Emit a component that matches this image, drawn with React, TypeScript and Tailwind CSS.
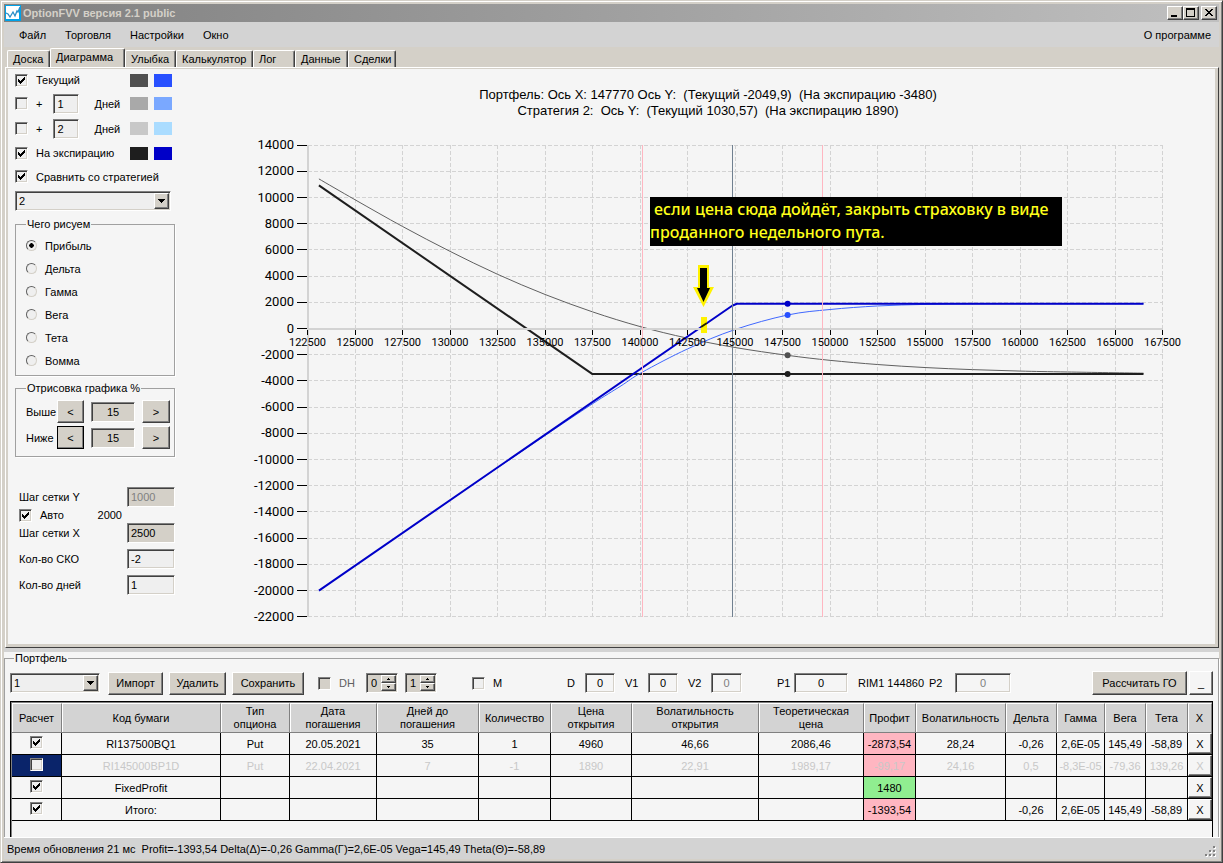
import { useState } from "react";
import type { ReactNode } from "react";
import clsx from "clsx";

const sunken =
  "border border-[#808080] border-r-white border-b-white shadow-[inset_1px_1px_#404040,inset_-1px_-1px_#d4d0c8]";
const raised =
  "border border-white border-r-[#404040] border-b-[#404040] shadow-[inset_-1px_-1px_#808080]";
const etched = "border border-[#a0a0a0] shadow-[1px_1px_#ffffff]";

const menu = ["Файл", "Торговля", "Настройки", "Окно"];

const tabs = [
  { label: "Доска", width: "w-[43px]" },
  { label: "Диаграмма", width: "w-[75px]" },
  { label: "Улыбка", width: "w-[51px]" },
  { label: "Калькулятор", width: "w-[77px]" },
  { label: "Лог", width: "w-[42px]" },
  { label: "Данные", width: "w-[53px]" },
  { label: "Сделки", width: "w-[48px]" },
];

const greeks = ["Прибыль", "Дельта", "Гамма", "Вега", "Тета", "Вомма"];

const columns = [
  { title: "Расчет", width: "w-[50px]" },
  { title: "Код бумаги", width: "w-[159px]" },
  { title: "Тип\nопциона", width: "w-[69px]" },
  { title: "Дата\nпогашения", width: "w-[87px]" },
  { title: "Дней до\nпогашения", width: "w-[102px]" },
  { title: "Количество", width: "w-[72px]" },
  { title: "Цена\nоткрытия", width: "w-[81px]" },
  { title: "Волатильность\nоткрытия", width: "w-[127px]" },
  { title: "Теоретическая\nцена", width: "w-[105px]" },
  { title: "Профит", width: "w-[52px]" },
  { title: "Волатильность", width: "w-[90px]" },
  { title: "Дельта", width: "w-[51px]" },
  { title: "Гамма", width: "w-[48px]" },
  { title: "Вега", width: "w-[41px]" },
  { title: "Тета", width: "w-[42px]" },
  { title: "X", width: "w-[24px]" },
];

const PROFIT = 8;

const rows = [
  {
    on: true,
    cells: ["RI137500BQ1", "Put", "20.05.2021", "35", "1", "4960", "46,66", "2086,46", "-2873,54", "28,24", "-0,26", "2,6E-05", "145,49", "-58,89"],
  },
  {
    on: false,
    cells: ["RI145000BP1D", "Put", "22.04.2021", "7", "-1", "1890", "22,91", "1989,17", "-99,17", "24,16", "0,5", "-8,3E-05", "-79,36", "139,26"],
  },
  {
    on: true,
    cells: ["FixedProfit", "", "", "", "", "", "", "", "1480", "", "", "", "", ""],
  },
  {
    on: true,
    cells: ["Итого:", "", "", "", "", "", "", "", "-1393,54", "", "-0,26", "2,6E-05", "145,49", "-58,89"],
  },
];

type CheckProps = {
  label: string;
  checked?: boolean;
  disabled?: boolean;
  hideLabel?: boolean;
};

const Check = ({ label, checked = false, disabled, hideLabel }: CheckProps) => {
  const [on, setOn] = useState(checked);
  return (
    <label className={clsx("inline-flex items-center gap-2", disabled && "text-[#606060]")}>
      <span className="grid size-[13px] shrink-0">
        <input
          type="checkbox"
          checked={on}
          disabled={disabled}
          aria-label={hideLabel ? label : undefined}
          onChange={() => setOn(!on)}
          className={clsx("col-start-1 row-start-1 size-[13px] appearance-none", sunken, disabled ? "bg-[#d4d0c8]" : "bg-[#efefef]")}
        />
        {on && (
          <svg viewBox="0 0 13 13" className="pointer-events-none col-start-1 row-start-1 size-[13px]" shapeRendering="crispEdges">
            <path d="M3 5h1v1h1v1h1v-1h1v-1h1v-1h1v-1h1v3h-1v1h-1v1h-1v1h-1v1h-1v-1h-1v-1h-1z" />
          </svg>
        )}
      </span>
      {!hideLabel && <span>{label}</span>}
    </label>
  );
};

type FieldProps = {
  label: string;
  value: string;
  className?: string;
  disabled?: boolean;
};

const Field = ({ label, value, className, disabled }: FieldProps) => (
  <input
    type="text"
    aria-label={label}
    defaultValue={value}
    disabled={disabled}
    className={clsx("h-5 shrink-0 px-[3px] disabled:text-[#808080]", sunken, className)}
  />
);

const Combo = ({ label, value, className }: { label: string; value: string; className: string }) => (
  <div className={clsx("relative h-5 shrink-0", className)}>
    <select aria-label={label} defaultValue={value} className={clsx("size-full appearance-none bg-[#efefef] pl-[3px]", sunken)}>
      <option>1</option>
      <option>2</option>
    </select>
    <span className={clsx("pointer-events-none absolute top-0.5 right-0.5 flex h-4 w-[15px] items-center justify-center bg-[#d4d0c8]", raised)}>
      <svg viewBox="0 0 7 4" className="h-1 w-[7px]" shapeRendering="crispEdges">
        <path d="M0 0h7v1h-1v1h-1v1h-1v1h-1v-1h-1v-1h-1v-1h-1z" />
      </svg>
    </span>
  </div>
);

const PushButton = ({ children, className, label }: { children: ReactNode; className?: string; label?: string }) => (
  <button type="button" aria-label={label} className={clsx("flex shrink-0 items-center justify-center", raised, className)}>
    {children}
  </button>
);

const Spin = ({ label, value }: { label: string; value: string }) => (
  <div className={clsx("flex h-5 w-8 shrink-0 bg-[#d4d0c8] p-px", sunken)}>
    <input type="text" aria-label={label} defaultValue={value} className="w-3 min-w-0 grow pl-[3px]" />
    <div className="flex w-[15px] flex-col">
      <PushButton label={`${label} +`} className="h-2 w-full bg-[#d4d0c8]">
        <svg viewBox="0 0 3 2" className="h-0.5 w-[3px]" shapeRendering="crispEdges">
          <path d="M1 0h1v1h1v1h-3v-1h1z" />
        </svg>
      </PushButton>
      <PushButton label={`${label} -`} className="h-2 w-full bg-[#d4d0c8]">
        <svg viewBox="0 0 3 2" className="h-0.5 w-[3px]" shapeRendering="crispEdges">
          <path d="M0 0h3v1h-1v1h-1v-1h-1z" />
        </svg>
      </PushButton>
    </div>
  </div>
);

const TitleBar = () => (
  <header className="flex h-[18px] items-center bg-gradient-to-r from-[#808080] to-[#c0c0c0] pr-0.5">
    <svg viewBox="0 0 16 16" className="ml-px size-4">
      <rect width="16" height="16" fill="#00a2e8" />
      <path d="M1 1h14v3h-1v10h-13z" fill="#fff" />
      <path d="M1 8l2 1 2 3 3-5 2 4 2-5 1 1 2-5" fill="none" stroke="#2a8fc8" strokeWidth="1.3" />
    </svg>
    <h1 className="ml-0.5 text-[11px] font-bold text-[#d4d0c8]">OptionFVV версия 2.1 public</h1>
    <div className="ml-auto flex">
      <PushButton label="Свернуть" className="h-3.5 w-4 bg-[#d4d0c8]">
        <svg viewBox="0 0 12 10" className="h-2.5 w-3" shapeRendering="crispEdges">
          <path d="M2 7h6v2h-6z" />
        </svg>
      </PushButton>
      <PushButton label="Развернуть" className="h-3.5 w-4 bg-[#d4d0c8]">
        <svg viewBox="0 0 12 10" className="h-2.5 w-3" shapeRendering="crispEdges">
          <path d="M1 0h9v9h-9zM2 2v6h7v-6z" fillRule="evenodd" />
        </svg>
      </PushButton>
      <PushButton label="Закрыть" className="ml-0.5 h-3.5 w-4 bg-[#d4d0c8]">
        <svg viewBox="0 0 12 10" className="h-2.5 w-3" shapeRendering="crispEdges">
          <path d="M2 1h2v1h1v1h2v-1h1v-1h2v1h-1v1h-1v1h-1v1h1v1h1v1h1v1h-2v-1h-1v-1h-2v1h-1v1h-2v-1h1v-1h1v-1h1v-1h-1v-1h-1v-1h-1z" />
        </svg>
      </PushButton>
    </div>
  </header>
);

const TabStrip = () => (
  <div role="tablist" className="flex h-5 items-end pl-[3px]">
    {tabs.map((tab) => {
      const active = tab.label === "Диаграмма";
      return (
        <button
          key={tab.label}
          type="button"
          role="tab"
          aria-selected={active}
          className={clsx(
            "rounded-t-[2px] border border-b-0 border-white border-r-[#404040] bg-[#d4d0c8] pl-[5px] text-left shadow-[inset_-1px_0_#808080]",
            active ? "h-[19px] pb-0.5" : "h-[17px]",
            tab.width,
          )}
        >
          {tab.label}
        </button>
      );
    })}
  </div>
);

const Swatches = ({ first, second }: { first: string; second: string }) => (
  <span className="ml-auto flex gap-1.5 pr-[3px]">
    <span className={clsx("h-[13px] w-[18px]", first)} />
    <span className={clsx("h-[13px] w-[18px]", second)} />
  </span>
);

const Step = ({ label, focused }: { label: string; focused?: boolean }) => (
  <div className="flex h-[23px] items-center">
    <span className="w-[31px]">{label}</span>
    <PushButton label={`${label} меньше`} className={clsx("h-[23px] w-[27px] bg-[#d4d0c8]", focused && "outline outline-1 -outline-offset-1 outline-black")}>
      &lt;
    </PushButton>
    <Field label={label} value="15" className="ml-[7px] w-11 bg-[#d4d0c8] text-center" />
    <PushButton label={`${label} больше`} className="ml-[7px] h-[23px] w-7 bg-[#d4d0c8]">
      &gt;
    </PushButton>
  </div>
);

const Settings = () => {
  const [greek, setGreek] = useState("Прибыль");
  return (
    <aside className="w-[177px] shrink-0 pr-2.5 pl-[7px]">
      <div className="flex h-[22px] items-center">
        <Check label="Текущий" checked />
        <Swatches first="bg-[#505050]" second="bg-[#2850ff]" />
      </div>
      <div className="flex h-[25px] items-center">
        <Check label="+" />
        <Field label="Дней, первая линия" value="1" className="ml-[11px] w-[26px] bg-[#efefef]" />
        <span className="ml-[15px]">Дней</span>
        <Swatches first="bg-[#a9a9a9]" second="bg-[#7aa8ff]" />
      </div>
      <div className="flex h-[25px] items-center">
        <Check label="+" />
        <Field label="Дней, вторая линия" value="2" className="ml-[11px] w-[26px] bg-[#efefef]" />
        <span className="ml-[15px]">Дней</span>
        <Swatches first="bg-[#c8c8c8]" second="bg-[#aadcff]" />
      </div>
      <div className="flex h-6 items-center">
        <Check label="На экспирацию" checked />
        <Swatches first="bg-[#1e1e1e]" second="bg-[#0000c8]" />
      </div>
      <div className="flex h-[23px] items-center">
        <Check label="Сравнить со стратегией" checked />
      </div>
      <Combo label="Стратегия" value="2" className="mt-[3px] w-[156px]" />

      <fieldset className={clsx("mt-[7px] px-2.5 pt-1 pb-[3px]", etched)}>
        <legend className="px-px leading-3">Чего рисуем</legend>
        {greeks.map((name) => (
          <label key={name} className="flex h-[23px] items-center gap-2">
            <input
              type="radio"
              name="greek"
              checked={greek === name}
              onChange={() => setGreek(name)}
              className="size-[11px] appearance-none rounded-full border border-[#606060] border-r-[#d4d0c8] border-b-[#d4d0c8] bg-[#efefef] checked:bg-[radial-gradient(circle,#000_2px,#efefef_2.5px)]"
            />
            {name}
          </label>
        ))}
      </fieldset>

      <fieldset className={clsx("mt-1.5 flex flex-col gap-[3px] pt-1.5 pr-1 pb-[7px] pl-2.5", etched)}>
        <legend className="px-px leading-3">Отрисовка графика %</legend>
        <Step label="Выше" />
        <Step label="Ниже" focused />
      </fieldset>

      <div className="mt-[30px] flex flex-col pl-1">
        <div className="flex h-5 items-center justify-between">
          Шаг сетки Y
          <Field label="Шаг сетки Y" value="1000" disabled className="w-12 bg-[#d4d0c8]" />
        </div>
        <div className="flex h-4 items-center">
          <Check label="Авто" checked />
          <span className="ml-auto pr-[53px]">2000</span>
        </div>
        <div className="flex h-5 items-center justify-between">
          Шаг сетки X
          <Field label="Шаг сетки X" value="2500" className="w-12 bg-[#d4d0c8]" />
        </div>
        <div className="mt-1.5 flex h-5 items-center justify-between">
          Кол-во СКО
          <Field label="Кол-во СКО" value="-2" className="w-12 bg-[#efefef]" />
        </div>
        <div className="mt-1.5 flex h-5 items-center justify-between">
          Кол-во дней
          <Field label="Кол-во дней" value="1" className="w-12 bg-[#efefef]" />
        </div>
      </div>
    </aside>
  );
};

type Point = [number, number];

const px = (price: number) => 122.5 + (price - 122500) * 0.019;
const py = (profit: number) => 259.5 - profit * 0.0131;

const line = (points: Point[]) => points.map(([a, b]) => `${px(a)},${py(b)}`).join(" ");

// Catmull-Rom through the points, written as cubic beziers
const smooth = (points: Point[]) => {
  const p = points.map(([a, b]) => [px(a), py(b)]);
  let d = `M${p[0][0]} ${p[0][1]}`;
  for (let i = 0; i < p.length - 1; i++) {
    const a = p[Math.max(i - 1, 0)];
    const b = p[i];
    const c = p[i + 1];
    const e = p[Math.min(i + 2, p.length - 1)];
    d += `C${b[0] + (c[0] - a[0]) / 6} ${b[1] + (c[1] - a[1]) / 6} ${c[0] - (e[0] - b[0]) / 6} ${c[1] - (e[1] - b[1]) / 6} ${c[0]} ${c[1]}`;
  }
  return d;
};

const portfolioNow: Point[] = [
  [123100, 11420], [125000, 9830], [127500, 7790], [130000, 5890], [132500, 4140], [135000, 2600],
  [137500, 1270], [140000, 150], [142500, -740], [145000, -1450], [147770, -2050], [150000, -2430],
  [152500, -2750], [155000, -2980], [157500, -3140], [160000, -3250], [162500, -3320], [166500, -3410],
];
const portfolioExpiry: Point[] = [[123100, 10920], [137500, -3480], [166500, -3480]];
const strategyNow: Point[] = [
  [123100, -20010], [130000, -13115], [132500, -10630], [135000, -8170], [137500, -5750], [139000, -4380],
  [140100, -3350], [142500, -1560], [145000, -80], [147770, 1031], [150000, 1450], [152500, 1720],
  [155000, 1840], [157500, 1880], [160000, 1890], [166500, 1890],
];
const strategyExpiry: Point[] = [[123100, -20010], [144850, 1740], [145100, 1890], [166500, 1890]];

const xTicks = Array.from({ length: 19 }, (_, i) => 122500 + i * 2500);
const yTicks = Array.from({ length: 19 }, (_, i) => 14000 - i * 2000);

const Chart = () => (
  <div className="min-w-0 flex-1">
    <svg viewBox="0 0 1030 575" className="block h-auto w-full" role="img" aria-label="Диаграмма прибыли">
      <g className="font-['Liberation_Sans',Arial,sans-serif] text-[13px]" textAnchor="middle">
        <text x="523" y="30" className="whitespace-pre">
          {"Портфель: Ось X: 147770 Ось Y:  (Текущий -2049,9)  (На экспирацию -3480)"}
        </text>
        <text x="523" y="46" className="whitespace-pre">
          {"Стратегия 2:  Ось Y:  (Текущий 1030,57)  (На экспирацию 1890)"}
        </text>
      </g>

      <g stroke="#d3d3d3" strokeDasharray="4 2" shapeRendering="crispEdges">
        {xTicks.map((v) => (
          <line key={v} x1={px(v)} x2={px(v)} y1={py(14000)} y2={py(-22000)} />
        ))}
        {yTicks.map((v) => (
          <line key={v} x1={px(122500)} x2={px(167500)} y1={py(v)} y2={py(v)} />
        ))}
      </g>

      <g fill="none" strokeLinejoin="round">
        <path d={smooth(portfolioNow)} stroke="#606060" />
        <polyline points={line(portfolioExpiry)} stroke="#1e1e1e" strokeWidth="2" />
        <path d={smooth(strategyNow)} stroke="#4068ff" />
        <polyline points={line(strategyExpiry)} stroke="#0000c8" strokeWidth="2" />
      </g>

      <path
        d={`M${px(122500)} ${py(14000)}V${py(-22000)}M${px(122500)} ${py(0)}H${px(167500)}`}
        stroke="#d3d3d3"
        strokeWidth="2"
        shapeRendering="crispEdges"
      />
      <g>
        <line x1="457.5" x2="457.5" y1="76" y2="548" stroke="#ffb6c1" />
        <line x1="637.5" x2="637.5" y1="76" y2="548" stroke="#ffb6c1" />
        <line x1="547.5" x2="547.5" y1="76" y2="548" stroke="#708090" />
      </g>
      <g stroke="#000" shapeRendering="crispEdges">
        {yTicks.map((v) => (
          <line key={v} x1="112" x2="122" y1={py(v)} y2={py(v)} />
        ))}
        {xTicks.map((v) => (
          <line key={v} x1={px(v)} x2={px(v)} y1={py(0) + 1} y2={py(0) + 6} />
        ))}
      </g>

      <circle cx={px(147770)} cy={py(1890)} r="3" fill="#0000c8" />
      <circle cx={px(147770)} cy={py(1031)} r="3" fill="#2850ff" />
      <circle cx={px(147770)} cy={py(-2050)} r="3" fill="#505050" />
      <circle cx={px(147770)} cy={py(-3480)} r="3" fill="#1e1e1e" />

      <g className="font-[Roboto,sans-serif] text-[13px]" textAnchor="end">
        {yTicks.map((v) => (
          <text key={v} x="109" y={py(v) + 4}>{v}</text>
        ))}
      </g>
      <g className="font-[Roboto,sans-serif] text-[11px]" textAnchor="middle">
        {xTicks.map((v) => (
          <text key={v} x={px(v)} y={py(0) + 17}>{v}</text>
        ))}
      </g>

      <rect x="465" y="128" width="412" height="49" />
      <g className="font-['Noto_Sans','Open_Sans',sans-serif] text-[16px] font-medium" fill="#ffff1a">
        <text x="469" y="146">если цена сюда дойдёт, закрыть страховку в виде</text>
        <text x="465" y="169">проданного недельного пута.</text>
      </g>

      <path d="M513 196h11v22h5l-10.5 20-10.5-20h5z" fill="#fff200" />
      <path d="M515 199h7v20h3l-6.5 14-6.5-14h3z" />
      <rect x="516" y="248" width="6" height="16" fill="#fff200" />
      <path d="M516 258l6-4" stroke="#222200" strokeWidth="2" />
    </svg>
  </div>
);

const Toolbar = () => (
  <div className="flex h-6 items-center">
    <Combo label="Портфель" value="1" className="w-[90px]" />
    <PushButton className="ml-2 h-[23px] w-[55px] bg-[#d4d0c8]">Импорт</PushButton>
    <PushButton className="ml-1.5 h-[23px] w-[57px] bg-[#d4d0c8]">Удалить</PushButton>
    <PushButton className="ml-1.5 h-[23px] w-[72px] bg-[#d4d0c8]">Сохранить</PushButton>
    <div className="ml-3.5 flex w-12">
      <Check label="DH" disabled />
    </div>
    <Spin label="DH минимум" value="0" />
    <div className="ml-[7px]">
      <Spin label="DH шаг" value="1" />
    </div>
    <div className="ml-[35px] flex w-[95px]">
      <Check label="M" />
    </div>
    <span className="w-[18px]">D</span>
    <Field label="D" value="0" className="w-[30px] text-center" />
    <span className="ml-2.5 w-[23px]">V1</span>
    <Field label="V1" value="0" className="w-[30px] text-center" />
    <span className="ml-2.5 w-[23px]">V2</span>
    <Field label="V2" value="0" disabled className="w-[31px] text-center" />
    <span className="ml-[35px] w-[17px]">P1</span>
    <Field label="P1" value="0" className="w-[54px] text-center" />
    <span className="ml-2.5 w-[71px] whitespace-nowrap">RIM1 144860</span>
    <span className="w-[26px]">P2</span>
    <Field label="P2" value="0" disabled className="w-14 text-center" />
    <PushButton className="ml-auto h-6 w-[95px] bg-[#d4d0c8]">Рассчитать ГО</PushButton>
    <PushButton label="Свернуть таблицу" className="ml-0.5 h-6 w-6 bg-[#f5f5f5]">_</PushButton>
  </div>
);

const profitColor = (value: string) => (value.startsWith("-") ? "bg-[#ffb6c1]" : "bg-[#90ee90]");

const Positions = () => (
  <div className="mt-1.5 grow border-t border-r border-l border-black pb-4 shadow-[inset_1px_1px_#808080]">
    <div className="pt-px pl-px">
      <table className="w-full table-fixed border-separate border-spacing-0 text-center">
        <thead>
          <tr className="h-[30px]">
            {columns.map((col) => (
              <th
                key={col.title}
                className={clsx("border-t border-r border-b border-t-white border-r-[#808080] border-b-[#808080] bg-[#d3d3d3] p-0 leading-[13px] font-normal whitespace-pre-line shadow-[inset_1px_0_#ffffff]", col.width)}
              >
                {col.title}
              </th>
            ))}
          </tr>
        </thead>
        <tbody>
          {rows.map((row) => (
            <tr key={row.cells[0]} className={clsx("h-[22px]", !row.on && "text-[#c8c8c8]")}>
              <td className={clsx("border-r border-b border-black p-0 leading-none", !row.on && "bg-[#0a246a]")}>
                <Check label={row.cells[0]} checked={row.on} hideLabel />
              </td>
              {row.cells.map((cell, i) => (
                <td key={i} className={clsx("border-r border-b border-black p-0 whitespace-nowrap", i === PROFIT && profitColor(cell))}>
                  {cell}
                </td>
              ))}
              <td className="border-b border-black p-0">
                <PushButton label={`Удалить ${row.cells[0]}`} className="h-[21px] w-full bg-[#f5f5f5]">
                  X
                </PushButton>
              </td>
            </tr>
          ))}
        </tbody>
      </table>
    </div>
  </div>
);

const App = () => (
  <div className="min-h-screen bg-[#d4d0c8] font-['Liberation_Sans',Arial,sans-serif] text-[11px] leading-[14px] text-black">
    <div className="flex min-h-screen flex-col border border-[#d4d0c8] border-r-[#404040] border-b-[#404040] p-[3px] shadow-[inset_1px_1px_#ffffff,inset_-1px_-1px_#808080]">
      <TitleBar />
      <nav className="flex h-[25px] items-center gap-[19px] bg-[#d3d3d3] px-[15px] pr-2">
        {menu.map((item) => (
          <button key={item} type="button">{item}</button>
        ))}
        <button type="button" className="ml-auto">О программе</button>
      </nav>
      <TabStrip />
      <main className="ml-px border border-white border-r-[#404040] border-b-[#404040] bg-[#f5f5f5]">
        <div className="flex border-t border-r-[3px] border-b-[3px] border-l-2 border-[#d4d0c8]">
          <Settings />
          <Chart />
        </div>
      </main>
      <section className="flex grow flex-col border-t-4 border-[#d3d3d3] bg-[#f5f5f5]">
        <fieldset className={clsx("flex grow flex-col border-b-0 pt-[7px] pr-[5px] pl-[5px]", etched)}>
          <legend className="ml-1 px-px leading-3">Портфель</legend>
          <Toolbar />
          <Positions />
        </fieldset>
      </section>
      <footer className="flex h-[22px] items-center border-t border-white bg-[#d3d3d3] pl-[3px]">
        <span className="whitespace-pre">
          {"Время обновления 21 мс  Profit=-1393,54 Delta(Δ)=-0,26 Gamma(Γ)=2,6E-05 Vega=145,49 Theta(Θ)=-58,89"}
        </span>
        <svg viewBox="0 0 12 12" className="mt-1.5 mr-0.5 ml-auto size-3" shapeRendering="crispEdges">
          <path d="M9 1h2v2h-2zM5 5h2v2h-2zM9 5h2v2h-2zM1 9h2v2h-2zM5 9h2v2h-2zM9 9h2v2h-2z" fill="#fff" />
          <path d="M8 0h2v2h-2zM4 4h2v2h-2zM8 4h2v2h-2zM0 8h2v2h-2zM4 8h2v2h-2zM8 8h2v2h-2z" fill="#808080" />
        </svg>
      </footer>
    </div>
  </div>
);

export default App;
